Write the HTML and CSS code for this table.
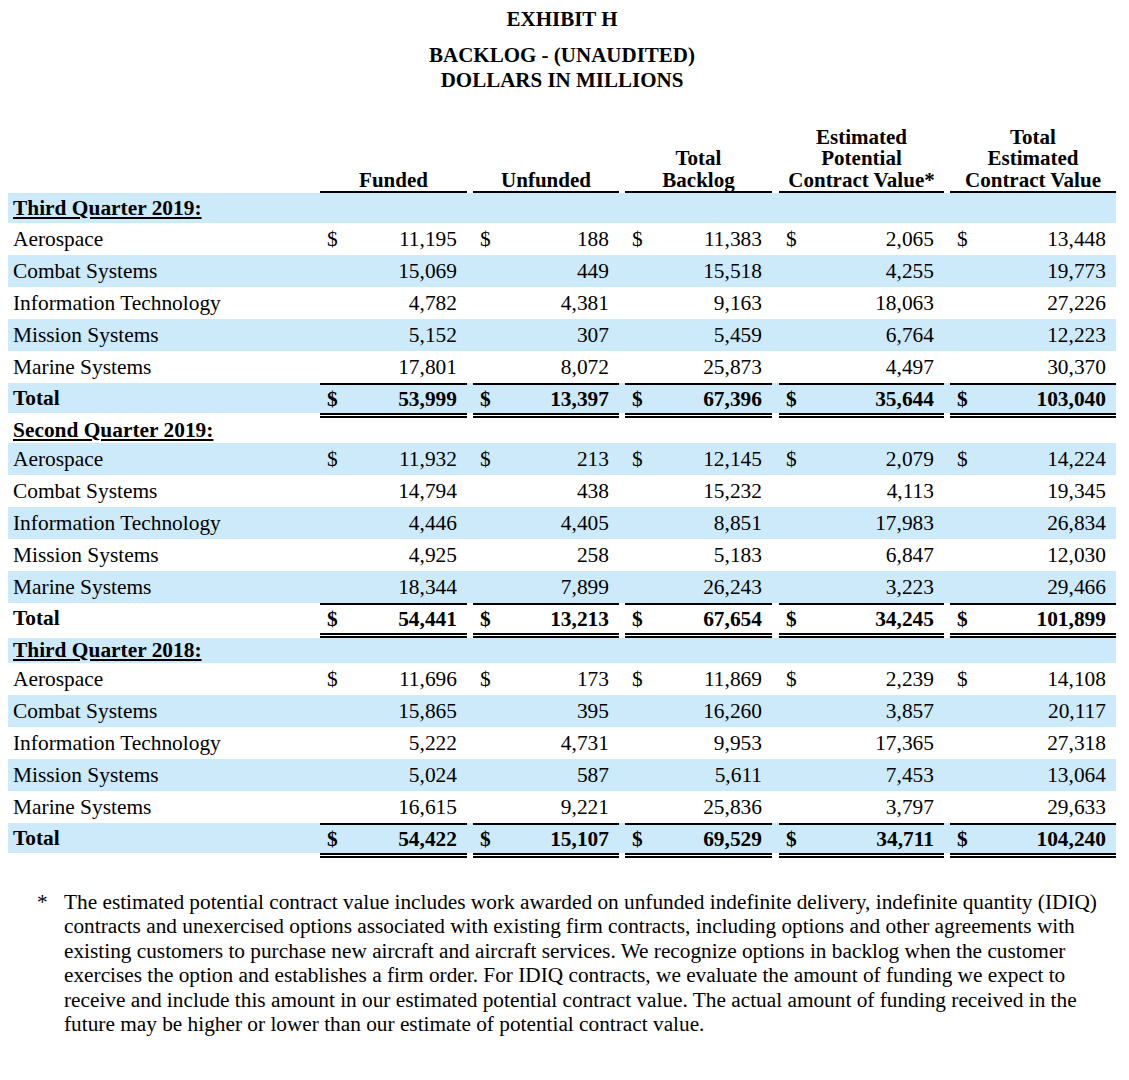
FILE: index.html
```html
<!DOCTYPE html>
<html>
<head>
<meta charset="utf-8">
<link rel="stylesheet" href="styles.css">
</head>
<body>
<div class="sheet">
  <div class="title">
    <h1>EXHIBIT H</h1>
    <h2>BACKLOG - (UNAUDITED)<br>DOLLARS IN MILLIONS</h2>
  </div>

  <div class="grid cols">
    <div></div>
    <div class="g"><div class="h">Funded</div></div>
    <div class="g"><div class="h">Unfunded</div></div>
    <div class="g"><div class="h">Total<br>Backlog</div></div>
    <div class="g"><div class="h">Estimated<br>Potential<br>Contract Value*</div></div>
    <div class="g"><div class="h">Total<br>Estimated<br>Contract Value</div></div>
  </div>

  <!-- Third Quarter 2019 -->
  <div class="grid head first blue"><div class="lbl sec">Third Quarter 2019:</div></div>
  <div class="grid row">
    <div class="lbl">Aerospace</div>
    <div class="g"><div class="v"><span class="cur">$</span><span class="num">11,195</span></div></div>
    <div class="g"><div class="v"><span class="cur">$</span><span class="num">188</span></div></div>
    <div class="g"><div class="v"><span class="cur">$</span><span class="num">11,383</span></div></div>
    <div class="g"><div class="v"><span class="cur">$</span><span class="num">2,065</span></div></div>
    <div class="g"><div class="v"><span class="cur">$</span><span class="num">13,448</span></div></div>
  </div>
  <div class="grid row blue">
    <div class="lbl">Combat Systems</div>
    <div class="g"><div class="v"><span class="num">15,069</span></div></div>
    <div class="g"><div class="v"><span class="num">449</span></div></div>
    <div class="g"><div class="v"><span class="num">15,518</span></div></div>
    <div class="g"><div class="v"><span class="num">4,255</span></div></div>
    <div class="g"><div class="v"><span class="num">19,773</span></div></div>
  </div>
  <div class="grid row">
    <div class="lbl">Information Technology</div>
    <div class="g"><div class="v"><span class="num">4,782</span></div></div>
    <div class="g"><div class="v"><span class="num">4,381</span></div></div>
    <div class="g"><div class="v"><span class="num">9,163</span></div></div>
    <div class="g"><div class="v"><span class="num">18,063</span></div></div>
    <div class="g"><div class="v"><span class="num">27,226</span></div></div>
  </div>
  <div class="grid row blue">
    <div class="lbl">Mission Systems</div>
    <div class="g"><div class="v"><span class="num">5,152</span></div></div>
    <div class="g"><div class="v"><span class="num">307</span></div></div>
    <div class="g"><div class="v"><span class="num">5,459</span></div></div>
    <div class="g"><div class="v"><span class="num">6,764</span></div></div>
    <div class="g"><div class="v"><span class="num">12,223</span></div></div>
  </div>
  <div class="grid row">
    <div class="lbl">Marine Systems</div>
    <div class="g"><div class="v"><span class="num">17,801</span></div></div>
    <div class="g"><div class="v"><span class="num">8,072</span></div></div>
    <div class="g"><div class="v"><span class="num">25,873</span></div></div>
    <div class="g"><div class="v"><span class="num">4,497</span></div></div>
    <div class="g"><div class="v"><span class="num">30,370</span></div></div>
  </div>
  <div class="grid total blue">
    <div class="lbl">Total</div>
    <div class="g"><div class="v"><span class="cur">$</span><span class="num">53,999</span></div></div>
    <div class="g"><div class="v"><span class="cur">$</span><span class="num">13,397</span></div></div>
    <div class="g"><div class="v"><span class="cur">$</span><span class="num">67,396</span></div></div>
    <div class="g"><div class="v"><span class="cur">$</span><span class="num">35,644</span></div></div>
    <div class="g"><div class="v"><span class="cur">$</span><span class="num">103,040</span></div></div>
  </div>

  <!-- Second Quarter 2019 -->
  <div class="grid head"><div class="lbl sec">Second Quarter 2019:</div></div>
  <div class="grid row blue">
    <div class="lbl">Aerospace</div>
    <div class="g"><div class="v"><span class="cur">$</span><span class="num">11,932</span></div></div>
    <div class="g"><div class="v"><span class="cur">$</span><span class="num">213</span></div></div>
    <div class="g"><div class="v"><span class="cur">$</span><span class="num">12,145</span></div></div>
    <div class="g"><div class="v"><span class="cur">$</span><span class="num">2,079</span></div></div>
    <div class="g"><div class="v"><span class="cur">$</span><span class="num">14,224</span></div></div>
  </div>
  <div class="grid row">
    <div class="lbl">Combat Systems</div>
    <div class="g"><div class="v"><span class="num">14,794</span></div></div>
    <div class="g"><div class="v"><span class="num">438</span></div></div>
    <div class="g"><div class="v"><span class="num">15,232</span></div></div>
    <div class="g"><div class="v"><span class="num">4,113</span></div></div>
    <div class="g"><div class="v"><span class="num">19,345</span></div></div>
  </div>
  <div class="grid row blue">
    <div class="lbl">Information Technology</div>
    <div class="g"><div class="v"><span class="num">4,446</span></div></div>
    <div class="g"><div class="v"><span class="num">4,405</span></div></div>
    <div class="g"><div class="v"><span class="num">8,851</span></div></div>
    <div class="g"><div class="v"><span class="num">17,983</span></div></div>
    <div class="g"><div class="v"><span class="num">26,834</span></div></div>
  </div>
  <div class="grid row">
    <div class="lbl">Mission Systems</div>
    <div class="g"><div class="v"><span class="num">4,925</span></div></div>
    <div class="g"><div class="v"><span class="num">258</span></div></div>
    <div class="g"><div class="v"><span class="num">5,183</span></div></div>
    <div class="g"><div class="v"><span class="num">6,847</span></div></div>
    <div class="g"><div class="v"><span class="num">12,030</span></div></div>
  </div>
  <div class="grid row blue">
    <div class="lbl">Marine Systems</div>
    <div class="g"><div class="v"><span class="num">18,344</span></div></div>
    <div class="g"><div class="v"><span class="num">7,899</span></div></div>
    <div class="g"><div class="v"><span class="num">26,243</span></div></div>
    <div class="g"><div class="v"><span class="num">3,223</span></div></div>
    <div class="g"><div class="v"><span class="num">29,466</span></div></div>
  </div>
  <div class="grid total">
    <div class="lbl">Total</div>
    <div class="g"><div class="v"><span class="cur">$</span><span class="num">54,441</span></div></div>
    <div class="g"><div class="v"><span class="cur">$</span><span class="num">13,213</span></div></div>
    <div class="g"><div class="v"><span class="cur">$</span><span class="num">67,654</span></div></div>
    <div class="g"><div class="v"><span class="cur">$</span><span class="num">34,245</span></div></div>
    <div class="g"><div class="v"><span class="cur">$</span><span class="num">101,899</span></div></div>
  </div>

  <!-- Third Quarter 2018 -->
  <div class="grid head blue"><div class="lbl sec">Third Quarter 2018:</div></div>
  <div class="grid row">
    <div class="lbl">Aerospace</div>
    <div class="g"><div class="v"><span class="cur">$</span><span class="num">11,696</span></div></div>
    <div class="g"><div class="v"><span class="cur">$</span><span class="num">173</span></div></div>
    <div class="g"><div class="v"><span class="cur">$</span><span class="num">11,869</span></div></div>
    <div class="g"><div class="v"><span class="cur">$</span><span class="num">2,239</span></div></div>
    <div class="g"><div class="v"><span class="cur">$</span><span class="num">14,108</span></div></div>
  </div>
  <div class="grid row blue">
    <div class="lbl">Combat Systems</div>
    <div class="g"><div class="v"><span class="num">15,865</span></div></div>
    <div class="g"><div class="v"><span class="num">395</span></div></div>
    <div class="g"><div class="v"><span class="num">16,260</span></div></div>
    <div class="g"><div class="v"><span class="num">3,857</span></div></div>
    <div class="g"><div class="v"><span class="num">20,117</span></div></div>
  </div>
  <div class="grid row">
    <div class="lbl">Information Technology</div>
    <div class="g"><div class="v"><span class="num">5,222</span></div></div>
    <div class="g"><div class="v"><span class="num">4,731</span></div></div>
    <div class="g"><div class="v"><span class="num">9,953</span></div></div>
    <div class="g"><div class="v"><span class="num">17,365</span></div></div>
    <div class="g"><div class="v"><span class="num">27,318</span></div></div>
  </div>
  <div class="grid row blue">
    <div class="lbl">Mission Systems</div>
    <div class="g"><div class="v"><span class="num">5,024</span></div></div>
    <div class="g"><div class="v"><span class="num">587</span></div></div>
    <div class="g"><div class="v"><span class="num">5,611</span></div></div>
    <div class="g"><div class="v"><span class="num">7,453</span></div></div>
    <div class="g"><div class="v"><span class="num">13,064</span></div></div>
  </div>
  <div class="grid row">
    <div class="lbl">Marine Systems</div>
    <div class="g"><div class="v"><span class="num">16,615</span></div></div>
    <div class="g"><div class="v"><span class="num">9,221</span></div></div>
    <div class="g"><div class="v"><span class="num">25,836</span></div></div>
    <div class="g"><div class="v"><span class="num">3,797</span></div></div>
    <div class="g"><div class="v"><span class="num">29,633</span></div></div>
  </div>
  <div class="grid total blue">
    <div class="lbl">Total</div>
    <div class="g"><div class="v"><span class="cur">$</span><span class="num">54,422</span></div></div>
    <div class="g"><div class="v"><span class="cur">$</span><span class="num">15,107</span></div></div>
    <div class="g"><div class="v"><span class="cur">$</span><span class="num">69,529</span></div></div>
    <div class="g"><div class="v"><span class="cur">$</span><span class="num">34,711</span></div></div>
    <div class="g"><div class="v"><span class="cur">$</span><span class="num">104,240</span></div></div>
  </div>

  <div class="note">
    <span class="star">*</span>
    <p>The estimated potential contract value includes work awarded on unfunded indefinite delivery, indefinite quantity (IDIQ)<br>contracts and unexercised options associated with existing firm contracts, including options and other agreements with<br>existing customers to purchase new aircraft and aircraft services. We recognize options in backlog when the customer<br>exercises the option and establishes a firm order. For IDIQ contracts, we evaluate the amount of funding we expect to<br>receive and include this amount in our estimated potential contract value. The actual amount of funding received in the<br>future may be higher or lower than our estimate of potential contract value.</p>
  </div>
</div>
</body>
</html>
```

FILE: styles.css
```css
html, body {
  margin: 0;
  padding: 0;
  background: #ffffff;
  color: #000000;
  font-family: "Liberation Serif", "Times New Roman", serif;
}

.sheet {
  width: 1108px;
  margin-left: 8px;
}

.title {
  padding-top: 7px;
  text-align: center;
}

.title h1 {
  margin: 0;
  font-size: 21px;
  line-height: 24px;
  font-weight: bold;
}

.title h2 {
  margin: 12px 0 0 0;
  font-size: 21px;
  line-height: 25px;
  font-weight: bold;
}

.grid {
  display: grid;
  grid-template-columns: 312px 147px 152px 153px 172px 172px;
  font-size: 21.4px;
}

.cols {
  margin-top: 7px;
  height: 93px;
  font-size: 21px;
}

.g {
  padding-left: 6px;
  height: 100%;
  box-sizing: border-box;
}

.g:nth-child(2) {
  padding-left: 0;
}

.g:nth-child(5) {
  padding-left: 7px;
}

.h {
  height: 100%;
  box-sizing: border-box;
  border-bottom: 2px solid #000;
  display: flex;
  align-items: flex-end;
  justify-content: center;
  text-align: center;
  font-weight: bold;
  line-height: 21.5px;
}

.blue {
  background: #cdeafa;
}

.row {
  height: 32px;
}

.head {
  height: 25px;
}

.head.first {
  height: 30px;
}

.lbl {
  padding-left: 5px;
  display: flex;
  align-items: center;
  height: 100%;
  white-space: nowrap;
}

.sec {
  font-weight: bold;
  text-decoration: underline;
  text-decoration-thickness: 2px;
  text-underline-offset: 2px;
}

.head .lbl {
  grid-column: 1 / 3;
}

.v {
  height: 100%;
  box-sizing: border-box;
  display: flex;
  align-items: center;
  padding: 0 10px 0 7px;
}

.num {
  margin-left: auto;
}

.total {
  height: 35px;
  font-weight: bold;
}

.total.blue {
  background: linear-gradient(#cdeafa, #cdeafa) 0 0 / 100% 30px no-repeat;
}

.total .lbl {
  height: 30px;
}

.total .v {
  border-top: 2px solid #000;
  border-bottom: 5px double #000;
}

.note {
  display: flex;
  margin-top: 32px;
  margin-left: 29px;
  font-size: 21.3px;
  line-height: 24.4px;
}

.star {
  width: 27px;
  flex: none;
}

.note p {
  margin: 0;
  white-space: nowrap;
}
```
